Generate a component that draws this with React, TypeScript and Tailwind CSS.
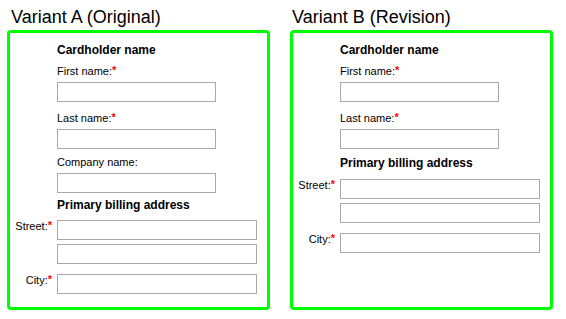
import React from "react";

const FONT = { fontFamily: '"Liberation Sans", Arial, sans-serif' };

function Req() {
  return <span className="align-top text-[11px] font-bold leading-[11px] text-[#ff0000]">*</span>;
}

function Field({ wide }: { wide?: boolean }) {
  return (
    <div
      className={`h-5 border border-[#a9a9a9] bg-white ${wide ? "w-[200px]" : "w-[159px]"}`}
    />
  );
}

function AddrRow({ label, className }: { label?: string; className?: string }) {
  return (
    <div className={`flex ${className ?? ""}`}>
      <div className="w-[47px] pr-[5px] text-right text-[11px] leading-[13px] text-black">
        {label && (
          <>
            {label}
            <Req />
          </>
        )}
      </div>
      <Field wide />
    </div>
  );
}

function Panel({ revision }: { revision?: boolean }) {
  return (
    <div className="h-[280px] w-[263px] rounded-[4px] border-[3px] border-[#00ff00] bg-white pt-[10px]">
      <div className="ml-[47px]">
        <div className="text-[12px] font-bold leading-[14px] text-black">Cardholder name</div>
        <div className="mt-[8px] text-[11px] leading-[13px] text-black">
          First name:<Req />
        </div>
        <div className="mt-[4px]">
          <Field />
        </div>
        <div className="mt-[10px] text-[11px] leading-[13px] text-black">
          Last name:<Req />
        </div>
        <div className="mt-[4px]">
          <Field />
        </div>
        {!revision && (
          <>
            <div className="mt-[7px] text-[11px] leading-[13px] text-black">Company name:</div>
            <div className="mt-[4px]">
              <Field />
            </div>
          </>
        )}
        <div
          className={`text-[12px] font-bold leading-[14px] text-black ${revision ? "mt-[7px]" : "mt-[5px]"}`}
        >
          Primary billing address
        </div>
      </div>
      <AddrRow label="Street:" className={revision ? "mt-[9px]" : "mt-[8px]"} />
      <AddrRow className="mt-[4px]" />
      <AddrRow label="City:" className="mt-[10px]" />
    </div>
  );
}

export default function App() {
  return (
    <div className="h-[319px] w-[566px] bg-white" style={FONT}>
      <div className="flex gap-[20px] pl-[7px] pt-[7px]">
        <div className="w-[263px]">
          <div className="pl-[4px] text-[18px] leading-[20px] text-black">Variant A (Original)</div>
          <div className="mt-[3px]">
            <Panel />
          </div>
        </div>
        <div className="w-[263px]">
          <div className="pl-[2px] text-[18px] leading-[20px] text-black">Variant B (Revision)</div>
          <div className="mt-[3px]">
            <Panel revision />
          </div>
        </div>
      </div>
    </div>
  );
}
